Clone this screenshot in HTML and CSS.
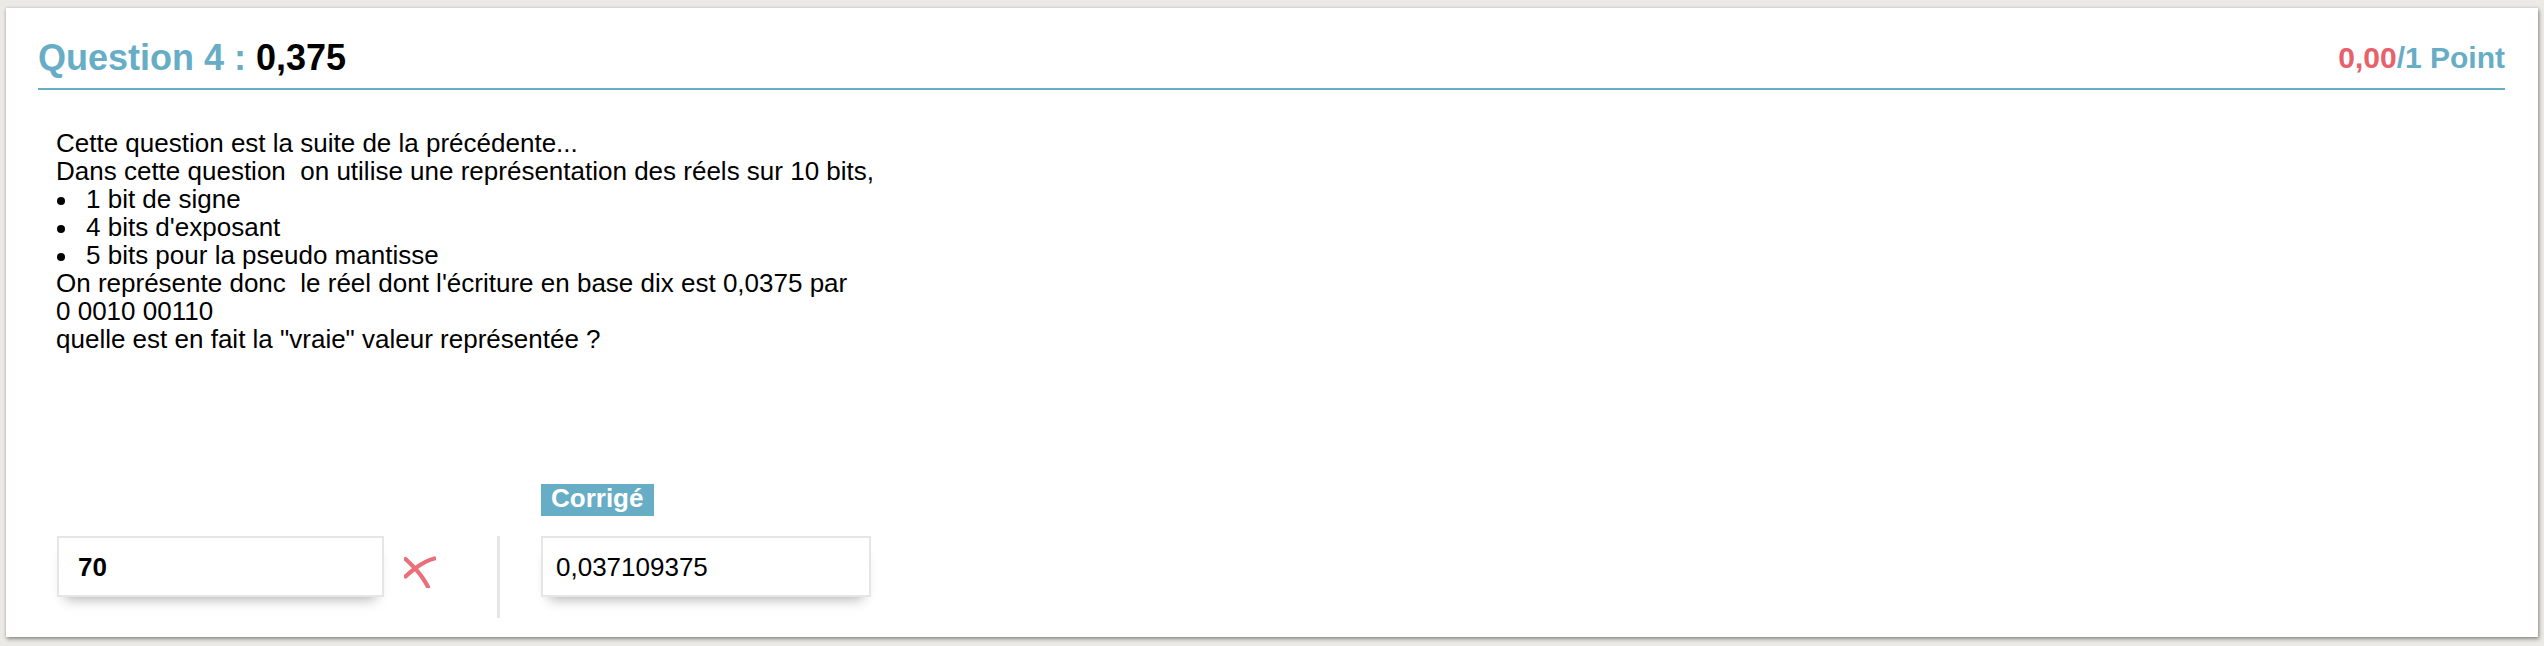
FILE: index.html
```html
<!DOCTYPE html>
<html lang="fr">
<head>
<meta charset="utf-8">
<title>Question 4</title>
<link rel="stylesheet" href="styles.css">
</head>
<body>
<div class="card">
  <div class="q-head">
    <h2 class="q-title"><span class="q-num">Question 4 :</span> 0,375</h2>
    <div class="q-score"><span class="q-got">0,00</span>/1 Point</div>
  </div>
  <div class="q-text">
    <div>Cette question est la suite de la précédente...</div>
    <div>Dans cette question&nbsp; on utilise une représentation des réels sur 10 bits,</div>
    <ul class="q-list">
      <li>1 bit de signe</li>
      <li>4 bits d'exposant</li>
      <li>5 bits pour la pseudo mantisse</li>
    </ul>
    <div>On représente donc&nbsp; le réel dont l'écriture en base dix est 0,0375 par</div>
    <div>0 0010 00110</div>
    <div>quelle est en fait la "vraie" valeur représentée ?</div>
  </div>
  <div class="answers">
    <span class="label">Corrigé</span>
    <div class="box box-user">70</div>
    <svg class="wrong" width="32" height="32" viewBox="0 0 32 32" aria-hidden="true">
      <path d="M1.5 3 C 7 8, 13 14, 18 21 C 20.5 24.5, 22.5 28, 24 31" fill="none" stroke="#e8606c" stroke-width="4.2" stroke-linecap="round"/>
      <path d="M30.5 2.5 C 24 4, 17 8, 11 12.5 C 7 15.5, 4 18, 1.5 20.5" fill="none" stroke="#e8606c" stroke-width="4.2" stroke-linecap="round"/>
    </svg>
    <div class="divider"></div>
    <div class="box box-key">0,037109375</div>
  </div>
</div>
</body>
</html>
```
FILE: styles.css
```css
html, body {
  margin: 0;
  padding: 0;
}
body {
  background: #ebeae6;
  font-family: "Liberation Sans", Arial, Helvetica, sans-serif;
  color: #000;
  padding: 8px 6px 9px 6px;
  box-sizing: border-box;
  height: 646px;
}
.card {
  background: #fff;
  height: 629px;
  box-sizing: border-box;
  padding: 30px 33px 0 32px;
  box-shadow: 1px 2px 4px rgba(0, 0, 0, 0.4), 0 0 3px rgba(0, 0, 0, 0.12);
}
.q-head {
  display: flex;
  justify-content: space-between;
  align-items: center;
  border-bottom: 2px solid #67adc6;
  padding-bottom: 10px;
}
.q-title {
  margin: 0;
  font-size: 36px;
  line-height: 40px;
  font-weight: bold;
  color: #000;
}
.q-num {
  color: #67adc6;
}
.q-score {
  font-size: 30px;
  line-height: 40px;
  font-weight: bold;
  color: #67adc6;
}
.q-got {
  color: #e9606b;
}
.q-text {
  padding: 39px 18px 0 18px;
  font-size: 26px;
  line-height: 28px;
}
.q-list {
  list-style: none;
  margin: 0;
  padding: 0;
}
.q-list li::before {
  content: "";
  display: inline-block;
  width: 8px;
  height: 8px;
  border-radius: 50%;
  background: #000;
  margin: 0 21px 0 1px;
  vertical-align: 3px;
}
.answers {
  margin-top: 131px;
  padding-left: 19px;
  display: grid;
  grid-template-columns: auto auto auto auto;
  justify-content: start;
  align-items: start;
  row-gap: 20px;
}
.label {
  grid-column: 4;
  grid-row: 1;
  justify-self: start;
  background: #67adc6;
  color: #fff;
  font-weight: bold;
  font-size: 26px;
  line-height: 28px;
  padding: 0 11px 4px 10px;
}
.box {
  grid-row: 2;
  box-sizing: border-box;
  height: 61px;
  border: 2px solid #e6e6e6;
  background: #fff;
  font-size: 26px;
  line-height: 28px;
  padding-top: 15px;
  box-shadow: 0 10px 12px -8px rgba(0, 0, 0, 0.32);
}
.box-user {
  grid-column: 1;
  width: 327px;
  padding-left: 19px;
  font-weight: bold;
  margin-right: 20px;
}
.wrong {
  grid-column: 2;
  grid-row: 2;
  display: block;
  margin-top: 20px;
  margin-right: 61px;
  opacity: 0.9;
  filter: blur(0.6px);
}
.divider {
  grid-column: 3;
  grid-row: 2;
  width: 3px;
  height: 82px;
  background: #e6e6e6;
  margin-right: 41px;
}
.box-key {
  grid-column: 4;
  width: 330px;
  padding-left: 13px;
}
```
